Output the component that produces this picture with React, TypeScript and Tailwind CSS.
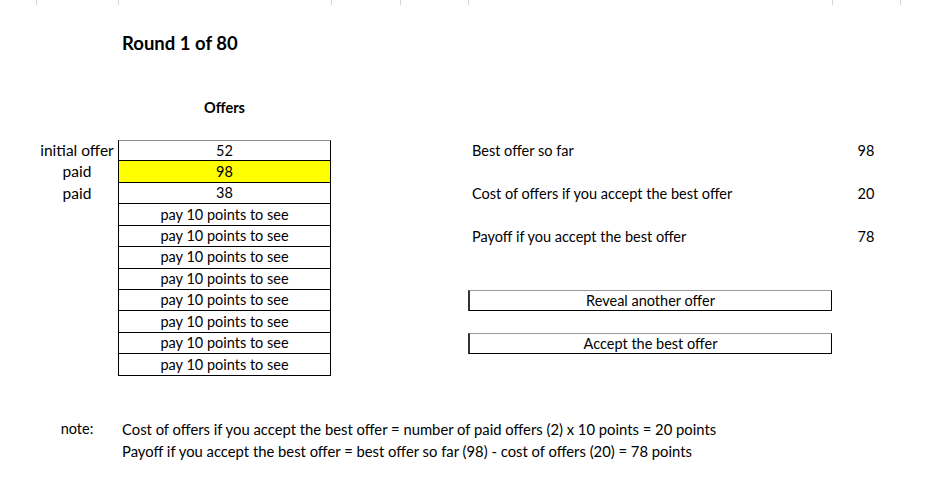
import React from 'react';

const font = { fontFamily: 'Lato, "Open Sans", sans-serif' };

export default function App() {
  const hidden = Array.from({ length: 8 }, () => 'pay 10 points to see');

  const stats = [
    { label: 'Best offer so far', value: 98, row: 'row-start-8' },
    { label: 'Cost of offers if you accept the best offer', value: 20, row: 'row-start-10' },
    { label: 'Payoff if you accept the best offer', value: 78, row: 'row-start-12' },
  ];

  return (
    <div
      className="w-[939px] h-[499px] bg-white text-black text-[14.5px] overflow-hidden"
      style={font}
    >
      <div className="grid grid-cols-[36px_82px_213px_69px_68px_364px_68px_1fr] grid-rows-[11.3px] auto-rows-[21.45px]">
        {/* column header stubs */}
        {Array.from({ length: 8 }, (_, i) => (
          <div key={i} className="row-start-1 h-[5px] border-l border-[#d6d6d6] first:border-l-0" />
        ))}

        {/* title */}
        <div className="row-start-3 col-start-3 pl-1 flex items-center font-bold text-[18.5px] whitespace-nowrap">
          Round 1 of 80
        </div>

        {/* Offers heading */}
        <div className="row-start-6 col-start-3 flex items-center justify-center font-bold">
          Offers
        </div>

        {/* labels */}
        <div className="row-start-8 col-start-2 flex items-center justify-center text-[15.5px]">initial offer</div>
        <div className="row-start-9 col-start-2 flex items-center justify-center text-[15.5px]">paid</div>
        <div className="row-start-10 col-start-2 flex items-center justify-center text-[15.5px]">paid</div>

        {/* offers table */}
        <div className="row-start-8 col-start-3 flex items-center justify-center border border-black border-t-[#8a8a8a]">
          52
        </div>
        <div className="row-start-9 col-start-3 flex items-center justify-center border-x border-b border-black bg-[#ffff00]">
          98
        </div>
        <div className="row-start-10 col-start-3 flex items-center justify-center border-x border-b border-black">
          38
        </div>
        {hidden.map((t, i) => (
          <div
            key={i}
            className="col-start-3 flex items-center justify-center border-x border-b border-black"
            style={{ gridRowStart: 11 + i }}
          >
            {t}
          </div>
        ))}

        {/* stats */}
        {stats.map((s) => (
          <React.Fragment key={s.label}>
            <div className={`${s.row} col-start-6 pl-1 flex items-center whitespace-nowrap`}>{s.label}</div>
            <div className={`${s.row} col-start-7 flex items-center justify-center`}>{s.value}</div>
          </React.Fragment>
        ))}

        {/* buttons */}
        <button className="row-start-15 col-start-6 flex items-center justify-center border border-black border-t-[#9a9a9a] border-l-2 border-l-[#333]">
          Reveal another offer
        </button>
        <button className="row-start-17 col-start-6 flex items-center justify-center border border-black border-t-[#9a9a9a] border-l-2 border-l-[#333]">
          Accept the best offer
        </button>

        {/* note */}
        <div className="row-start-21 col-start-2 flex items-center justify-center">note:</div>
        <div className="row-start-21 col-start-3 col-span-5 pl-1 flex items-center whitespace-nowrap text-[14.8px]">
          Cost of offers if you accept the best offer = number of paid offers (2) x 10 points = 20 points
        </div>
        <div className="row-start-22 col-start-3 col-span-5 pl-1 flex items-center whitespace-nowrap text-[14.8px]">
          Payoff if you accept the best offer = best offer so far (98) - cost of offers (20) = 78 points
        </div>
      </div>
    </div>
  );
}
